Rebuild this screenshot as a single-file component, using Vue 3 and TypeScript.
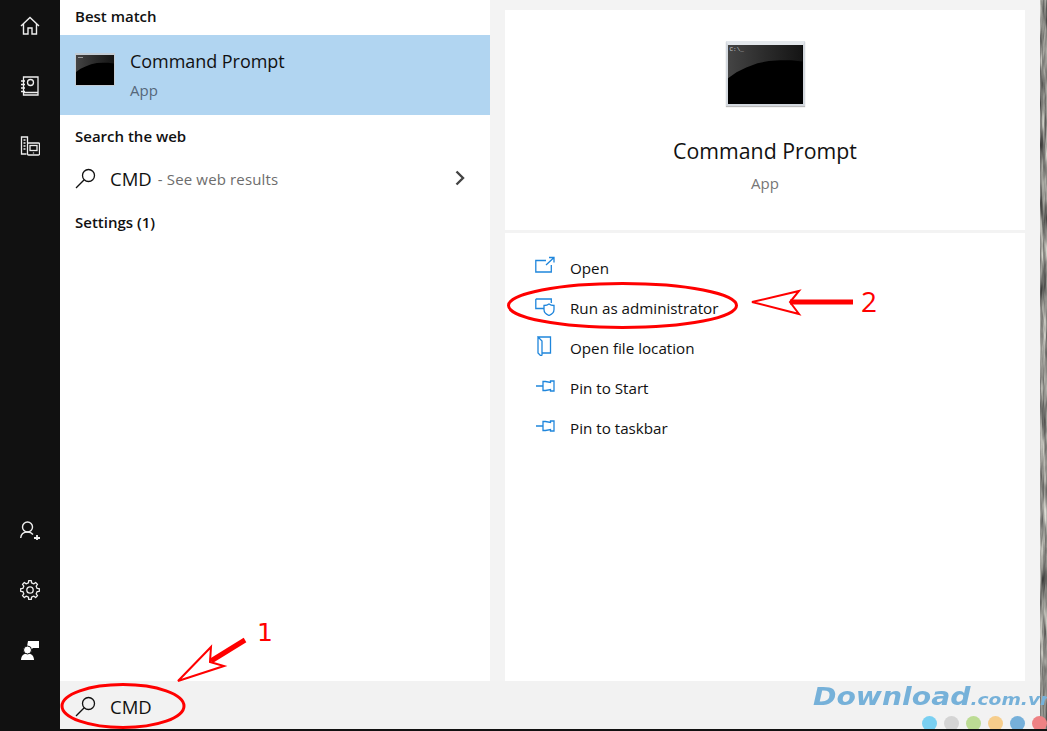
<script setup lang="ts">
const actions = [
  { id: 'open', label: 'Open' },
  { id: 'admin', label: 'Run as administrator' },
  { id: 'folder', label: 'Open file location' },
  { id: 'pin', label: 'Pin to Start' },
  { id: 'pin', label: 'Pin to taskbar' },
]
const dots = ['#7ad0f2', '#d4d4d4', '#bcdc94', '#f6cd8b', '#76b0da', '#ee8284']

// 8 tooth gear outline for the settings icon
function gearPath(): string {
  const pts: string[] = []
  const teeth = 8
  for (let i = 0; i < teeth; i++) {
    const a = (i / teeth) * Math.PI * 2
    const step = Math.PI / teeth
    const corners: [number, number][] = [
      [7.3, a - step * 0.55],
      [9.4, a - step * 0.36],
      [9.4, a + step * 0.36],
      [7.3, a + step * 0.55],
    ]
    for (const [r, t] of corners) {
      pts.push(`${(10 + r * Math.sin(t)).toFixed(2)} ${(10 - r * Math.cos(t)).toFixed(2)}`)
    }
  }
  return 'M' + pts.join('L') + 'Z'
}
const gear = gearPath()
</script>

<template>
  <div class="screen">
    <div class="main">
      <aside class="rail">
        <div class="rail-group">
          <svg class="rail-icon" viewBox="0 0 20 20" fill="none" stroke="#eee" stroke-width="1.4"><path d="M1 10 10 1.5 19 10M3.500 8v10h4.500v-6h4v6h4.500V8" /></svg>
          <svg class="rail-icon" viewBox="0 0 20 20" fill="none" stroke="#eee" stroke-width="1.3"><path d="M3.500 1h14.500v18H3.500zM1 5h4M1 8.500h4M1 12h4M1 15.500h4M3.500 16.500H18" /><circle cx="10.500" cy="6.500" r="3" /></svg>
          <svg class="rail-icon" viewBox="0 0 20 20" fill="none" stroke="#eee" stroke-width="1.3"><path d="M7.500 7V1H1.500v17h5" /><path d="M3.500 4h2M3.500 7h2M3.500 10h2M3.500 13h2" /><rect x="7.500" y="7" width="12" height="12" rx="1" /><rect x="10" y="9.500" width="7" height="5" /><path d="M13.500 16.500v1" /></svg>
        </div>
        <div class="rail-group">
          <svg class="rail-icon" viewBox="0 0 20 20" fill="none" stroke="#eee" stroke-width="1.400"><circle cx="7.500" cy="7" r="5" /><path d="M.7 18c.3-3.600 3-6 6.800-6 2.300 0 4.200.9 5.500 2.500" /><path d="M14 18h6M17 15v6" stroke-width="1.800" /></svg>
          <svg class="rail-icon" viewBox="0 0 20 20" fill="none" stroke="#eee" stroke-width="1.300"><circle cx="10" cy="10" r="3.200" /><path :d="gear" stroke-linejoin="round" /></svg>
          <svg class="rail-icon" viewBox="0 0 20 20"><path fill="#fff" d="M8 1h11v7h-6l-3 2.500-3-4z" /><path fill="#fff" d="M1 20c0-3.800 2.300-6.500 6.500-6.500S14 16.200 14 20z" /><circle cx="7.500" cy="10" r="4" fill="#fff" stroke="#111" stroke-width="1" /></svg>
        </div>
      </aside>

      <section class="results">
        <h2 class="heading first">Best match</h2>
        <div class="best">
          <div class="cmd-icon small"><span class="cmd-mark"></span><span class="cmd-glow"></span></div>
          <div>
            <div class="best-name">Command Prompt</div>
            <div class="best-type">App</div>
          </div>
        </div>
        <h2 class="heading">Search the web</h2>
        <div class="web-row">
          <svg class="search-icon" viewBox="0 0 21 21" fill="none" stroke="#111" stroke-width="1.300"><circle cx="13.500" cy="7.500" r="6" /><path d="M9.200 11.800 1 20" /></svg>
          <span class="web-term">CMD</span>
          <span class="web-hint">&nbsp;- See web results</span>
          <svg class="chevron" viewBox="0 0 10 16" fill="none" stroke="#444" stroke-width="2.400"><path d="M1.500 1.500 8 8l-6.500 6.500" /></svg>
        </div>
        <h2 class="heading">Settings (1)</h2>
      </section>

      <section class="detail">
        <div class="card app-card">
          <div class="cmd-icon large"><span class="cmd-prompt">C:\_</span><span class="cmd-glow"></span></div>
          <div class="app-name">Command Prompt</div>
          <div class="app-type">App</div>
        </div>
        <ul class="card actions">
          <li v-for="item in actions" :key="item.label" class="action">
            <svg class="action-icon" viewBox="0 0 20 20" fill="none" stroke="#1f86dc" stroke-width="1.300">
              <template v-if="item.id === 'open'">
                <path d="M11 4.500H.8v11.500h15.500V9" /><path d="M11 9l7.500-7M14 1.500h5v5" />
              </template>
              <template v-else-if="item.id === 'admin'">
                <path d="M.8 3h15.500v4M.8 3v9.500H9" /><path d="M14 8c1.500 1.200 3 1.500 5 1.500v4c0 3-2.500 5-5 6-2.500-1-5-3-5-6v-4c2 0 3.500-.3 5-1.500z" />
              </template>
              <template v-else-if="item.id === 'folder'">
                <path d="M3 1h12.500v16H7M3 1v16l3 3 1-1V5L3 1zM15.500 13v3" />
              </template>
              <template v-else>
                <path d="M1 10h7M8 5.500v9h2.500l5-1v1.500h3.500V5h-3.500v1.500l-5-1z" />
              </template>
            </svg>
            <span>{{ item.label }}</span>
          </li>
        </ul>
      </section>

      <div class="rock">
        <svg width="7" height="729">
          <filter id="grain" color-interpolation-filters="sRGB" x="0" y="0" width="100%" height="100%">
            <feTurbulence type="fractalNoise" baseFrequency="0.3 0.03" numOctaves="3" seed="4" />
            <feColorMatrix type="matrix" values="0.900 0 0 0 0.100 0.900 0 0 0 0.100 0.860 0 0 0 0.100 0 0 0 0 1" />
          </filter>
          <rect width="7" height="729" filter="url(#grain)" />
        </svg>
      </div>
    </div>

    <footer class="searchbar">
      <svg class="search-icon" viewBox="0 0 21 21" fill="none" stroke="#111" stroke-width="1.300"><circle cx="13.500" cy="7.500" r="6" /><path d="M9.200 11.800 1 20" /></svg>
      <span class="query">CMD</span>
    </footer>

    <!-- red marks drawn on top of the screenshot -->
    <svg class="marks" viewBox="0 0 1047 731" fill="none" stroke="#f00">
      <ellipse cx="123" cy="706" rx="61" ry="21.500" stroke-width="3" />
      <ellipse cx="622.500" cy="305.500" rx="114" ry="22" stroke-width="3" />
      <path d="M178 681 224 666 210 662 211 647z" stroke-width="2" fill="#fff" />
      <path d="M211 661 245 640" stroke-width="5" />
      <path d="M752 302 799 291 790 302 799 314z" stroke-width="2" fill="#fff" />
      <path d="M790 302h63" stroke-width="5" />
    </svg>
    <div class="num num-one">1</div>
    <div class="num num-two">2</div>

    <div class="brand">Download<span class="brand-tld">.com.vn</span></div>
    <div class="dots"><i v-for="c in dots" :key="c" :style="{ background: c }"></i></div>
  </div>
</template>

<style scoped>
.screen {
  position: relative;
  width: 1047px;
  height: 731px;
  overflow: hidden;
  font-family: "Open Sans", "Noto Sans", sans-serif;
  color: #111;
  background: #f3f3f3;
}
.main {
  display: flex;
  height: 681px;
}
.rail {
  width: 60px;
  flex: none;
  background: #111;
  display: flex;
  flex-direction: column;
  justify-content: space-between;
  align-items: center;
  padding: 16px 0 71px;
  height: 731px;
  box-sizing: border-box;
  position: relative;
  z-index: 1;
}
.rail-group {
  display: flex;
  flex-direction: column;
  gap: 40px;
}
.rail-icon {
  width: 20px;
  height: 20px;
  display: block;
}
.results {
  width: 430px;
  flex: none;
  background: #fff;
}
.heading {
  margin: 0;
  font-size: 15px;
  font-weight: 600;
  padding: 11px 0 0 15px;
  line-height: 20px;
}
.heading.first {
  padding-top: 6px;
  height: 35px;
  box-sizing: border-box;
}
.best {
  height: 80px;
  box-sizing: border-box;
  background: #b1d5f1;
  display: flex;
  align-items: flex-start;
  gap: 15px;
  padding: 13px 0 0 15px;
}
.cmd-icon {
  position: relative;
  background: #000;
  overflow: hidden;
  box-sizing: border-box;
  flex: none;
}
.cmd-icon.small {
  width: 40px;
  height: 33px;
  margin-top: 5px;
  border: 1px solid #c3ccd4;
  border-top-width: 2px;
}
.cmd-icon.large {
  width: 79px;
  height: 65px;
  border: 2px solid #d3d8de;
  border-top: 4px solid #e4e8ec;
  box-shadow: 0 1px 1px #bbb;
}
.cmd-glow {
  position: absolute;
  inset: 0;
  background: linear-gradient(90deg, #444, #2b2b2b 50%, #141414);
  clip-path: polygon(0 0, 100% 0, 100% 28%, 85% 26%, 70% 26%, 55% 27%, 40% 31%, 25% 38%, 12% 46%, 0 57%);
}
.cmd-prompt {
  position: absolute;
  left: 2px;
  top: 1px;
  z-index: 1;
  font-size: 6px;
  line-height: 8px;
  color: #ccc;
  font-family: "Liberation Mono", monospace;
}
.cmd-mark {
  position: absolute;
  left: 2px;
  top: 2px;
  width: 5px;
  height: 1px;
  background: #999;
  z-index: 1;
}
.best-name {
  font-size: 18px;
  letter-spacing: -.05px;
  line-height: 26px;
  margin-bottom: 6px;
}
.best-type {
  font-size: 15px;
  line-height: 20px;
  color: #56677a;
}
.web-row {
  height: 45px;
  display: flex;
  align-items: center;
  padding-left: 15px;
  position: relative;
  margin-top: 10px;
}
.search-icon {
  width: 21px;
  height: 21px;
  flex: none;
  margin-right: 14px;
}
.web-term {
  font-size: 18.500px;
}
.web-hint {
  font-size: 15px;
  letter-spacing: .15px;
  color: #6d6d6d;
  margin: 1px 0 0 2px;
}
.chevron {
  position: absolute;
  right: 25px;
  top: 14px;
  width: 10px;
  height: 16px;
}
.detail {
  flex: 1;
  padding: 10px 15px 0;
  display: flex;
  flex-direction: column;
  gap: 3px;
}
.card {
  background: #fff;
}
.app-card {
  height: 220px;
  display: flex;
  flex-direction: column;
  align-items: center;
  padding-top: 31px;
  box-sizing: border-box;
}
.app-name {
  font-size: 21.300px;
  line-height: 30px;
  margin-top: 30px;
}
.app-type {
  font-size: 15px;
  line-height: 20px;
  margin-top: 7px;
  color: #767676;
}
.actions {
  flex: 1;
  list-style: none;
  margin: 0;
  padding: 15px 0 0 30px;
}
.action {
  height: 40px;
  display: flex;
  align-items: center;
  gap: 15px;
  font-size: 15.200px;
}
.action-icon {
  width: 20px;
  height: 20px;
  flex: none;
  margin-top: -5px;
}
.rock {
  width: 7px;
  flex: none;
  height: 729px;
  position: relative;
  z-index: 1;
  background: #8f8e88;
}
.rock svg {
  display: block;
}
.searchbar {
  height: 50px;
  box-sizing: border-box;
  margin-left: 60px;
  background: #f2f2f2;
  border-bottom: 2px solid #111;
  display: flex;
  align-items: center;
  padding: 2px 0 0 15px;
}
.query {
  font-size: 18.500px;
}
.marks {
  position: absolute;
  inset: 0;
  width: 1047px;
  height: 731px;
  z-index: 2;
}
.num {
  position: absolute;
  z-index: 2;
  color: #f00;
  line-height: 30px;
}
.num-one {
  left: 257px;
  top: 618px;
  font: 500 25px/30px "DejaVu Sans", sans-serif;
}
.num-two {
  left: 861px;
  top: 286px;
  font-size: 28px;
  font-weight: 500;
}
.brand {
  position: absolute;
  z-index: 2;
  left: 813px;
  top: 680px;
  font: italic 700 25px/34px "DejaVu Sans", sans-serif;
  color: #76b1d9;
  white-space: nowrap;
  transform: scaleX(1.13);
  transform-origin: left center;
}
.brand-tld {
  font-size: 16.500px;
}
.dots {
  position: absolute;
  z-index: 2;
  left: 922px;
  top: 716px;
  height: 13px;
  overflow: hidden;
  display: flex;
  gap: 7px;
}
.dots i {
  width: 15px;
  height: 15px;
  flex: none;
  border-radius: 50%;
  display: block;
}
</style>

<style>
html, body {
  margin: 0;
  background: #111;
}
</style>
